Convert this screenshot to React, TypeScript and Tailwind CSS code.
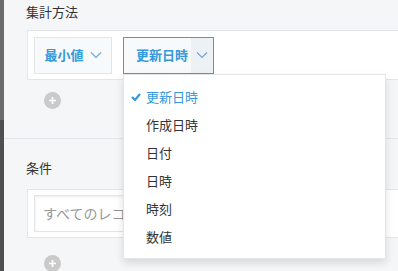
import React from "react";

const font = { fontFamily: '"Noto Sans CJK JP", "Noto Sans", sans-serif' };

function PlusCircle() {
  return (
    <div className="w-[17px] h-[17px] rounded-full bg-[#cacaca] flex items-center justify-center">
      <svg width="9" height="9" viewBox="0 0 9 9">
        <path d="M4.5 1v7M1 4.5h7" stroke="#fff" strokeWidth="1.7" />
      </svg>
    </div>
  );
}

function Chevron() {
  return (
    <svg width="12" height="8" viewBox="0 0 12 8">
      <path d="M1 1.5l5 5 5-5" fill="none" stroke="#6aa8d8" strokeWidth="1.1" />
    </svg>
  );
}

const items = ["更新日時", "作成日時", "日付", "日時", "時刻", "数値"];

export default function App() {
  return (
    <div className="relative w-[398px] h-[271px] overflow-hidden flex text-[#333]" style={font}>
      <div className="w-[4px] shrink-0 flex flex-col">
        <div className="h-[120px] bg-[#6b6b6b]" />
        <div className="flex-1 bg-[#4f4f4f]" />
      </div>
      <div className="flex-1 min-w-0 bg-[#f5f6f8] flex flex-col">
        <div className="pl-[22px] pt-[3px] pb-[29px] border-b border-[#e3e5e8]">
          <div className="text-[13px] leading-[18px]">集計方法</div>
          <div className="mt-[9px] ml-[1px] w-[400px] h-[50px] bg-white border border-[#e3e5e8] flex items-center px-[6px] gap-[11px]">
            <div className="w-[78px] h-[37px] shrink-0 border border-[#e3e5e8] bg-[#f7f9fa] flex items-center justify-center gap-[6px] font-bold text-[13px] text-[#3498db]">
              <span>最小値</span>
              <Chevron />
            </div>
            <div className="w-[91px] h-[37px] shrink-0 bg-[#3c9fe0] p-[1px] flex">
              <div className="flex-1 bg-[#f7f9fa] flex items-stretch font-bold text-[13px] text-[#3498db]">
                <div className="flex-1 flex items-center justify-end pr-[3px]">更新日時</div>
                <div className="w-[22px] bg-[#eef1f4] flex items-center justify-center">
                  <Chevron />
                </div>
              </div>
            </div>
          </div>
          <div className="mt-[12px] ml-[18px]">
            <PlusCircle />
          </div>
        </div>
        <div className="pl-[22px] pt-[20px]">
          <div className="text-[13px] leading-[18px]">条件</div>
          <div className="mt-[12px] ml-[1px] w-[400px] h-[49px] bg-white border border-[#e3e5e8] flex items-center px-[6px]">
            <div className="w-[300px] h-[37px] border border-[#e3e5e8] bg-white shadow-[inset_0_1px_3px_rgba(0,0,0,0.08)] flex items-center pl-[8px] text-[14px] text-[#999]">
              すべてのレコー
            </div>
          </div>
          <div className="mt-[17px] ml-[18px]">
            <PlusCircle />
          </div>
        </div>
      </div>
      <div className="absolute left-[123px] top-[74px] w-[263px] h-[185px] bg-white border border-[#e3e5e8] shadow-[0_4px_8px_rgba(0,0,0,0.12)] pt-[8px]">
        {items.map((it, i) => (
          <div key={it} className={`h-[28px] flex items-center text-[13px] ${i === 0 ? "text-[#3498db]" : "text-[#333]"}`}>
            <div className="w-[22px] flex justify-center pl-[2px]">
              {i === 0 && (
                <svg width="10" height="8" viewBox="0 0 10 8">
                  <path d="M1 4l3 3 5-6" fill="none" stroke="#3498db" strokeWidth="2.2" />
                </svg>
              )}
            </div>
            <span>{it}</span>
          </div>
        ))}
      </div>
    </div>
  );
}
